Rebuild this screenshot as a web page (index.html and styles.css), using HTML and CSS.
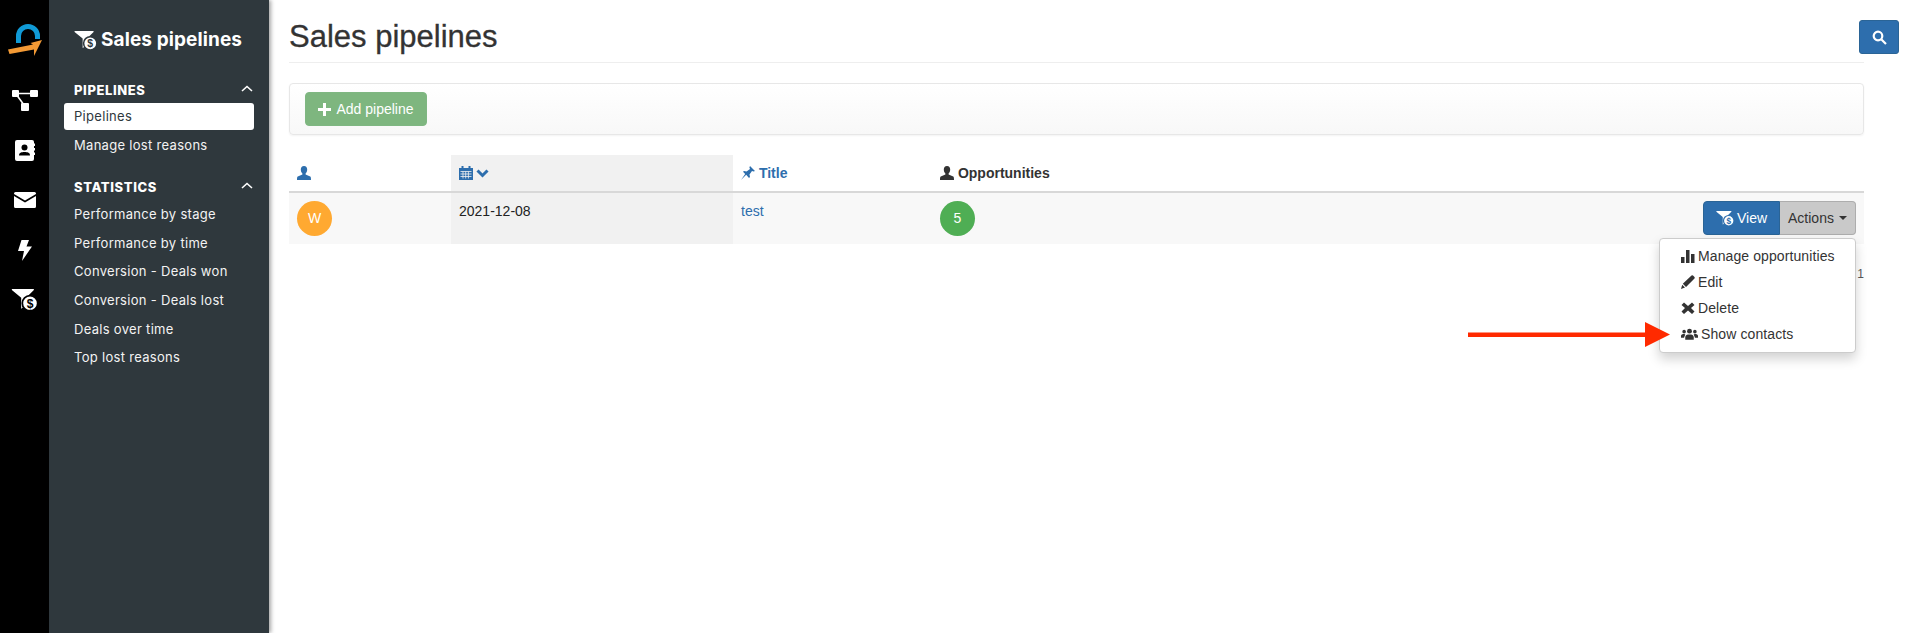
FILE: index.html
```html
<!DOCTYPE html>
<html lang="en">
<head>
<meta charset="utf-8">
<title>Sales pipelines</title>
<link rel="stylesheet" href="styles.css">
</head>
<body>
<svg class="defs" aria-hidden="true">
  <symbol id="user" viewBox="0 0 14 14">
    <path d="M7 0C9.2 0 10.2 1.6 10.2 3.6C10.2 5.4 9.4 6.8 8.6 7.6V8.6L13.2 10.6C13.8 11 14 11.6 14 14H0C0 11.6 .2 11 .8 10.6L5.4 8.6V7.6C4.6 6.8 3.8 5.4 3.8 3.6C3.8 1.6 4.800 0 7 0Z" fill="currentColor"/>
  </symbol>
  <symbol id="funnel-shape" viewBox="0 0 24 20">
    <path d="M1 0H20Q21 0 20.500 1L13.500 8V15L9 18V8L.5 1Q0 0 1 0Z" fill="currentColor"/>
  </symbol>
</svg>

<div class="app">
  <nav class="rail">
    <svg class="logo" viewBox="0 0 34 32" width="34" height="32">
      <path d="M10.500 19V12A9.500 9.500 0 0 1 29.500 12V15" fill="none" stroke="#109ad6" stroke-width="5"/>
      <path d="M0 25.500L25 20.500L22.500 19L34 16L26 32L26 25.500L1.500 30Z" fill="#f39a35"/>
    </svg>
    <div class="rail-slot">
      <svg viewBox="0 0 26 22" width="26" height="22">
        <path d="M4 4.500H20M4 5L12 16" stroke="#fff" stroke-width="1.600" fill="none"/>
        <rect x="0" y="1" width="7" height="7" rx="1" fill="#fff"/>
        <rect x="18" y="1" width="8" height="7" rx="1" fill="#fff"/>
        <rect x="9" y="14" width="8" height="8" rx="1" fill="#fff"/>
      </svg>
    </div>
    <div class="rail-slot">
      <svg viewBox="0 0 20 21" width="20" height="21">
        <path d="M2 0H17Q19 0 19 2V3.500H20V6H19V8H20V10.500H19V12.500H20V15H19V19Q19 21 17 21H2Q0 21 0 19V2Q0 0 2 0Z" fill="#fff"/>
        <circle cx="9.500" cy="7.500" r="3" fill="#000"/>
        <path d="M4 15.500C4 12.500 6.500 12 9.500 12S15 12.500 15 15.500Z" fill="#000"/>
      </svg>
    </div>
    <div class="rail-slot">
      <svg viewBox="0 0 22 16" width="22" height="16">
        <path d="M1.500 0H20.500Q22 0 22 1.500V2L11 8.500L0 2V1.500Q0 0 1.500 0Z" fill="#fff"/>
        <path d="M0 4L11 10.500L22 4V14.500Q22 16 20.500 16H1.500Q0 16 0 14.500Z" fill="#fff"/>
      </svg>
    </div>
    <div class="rail-slot">
      <svg viewBox="0 0 14 21" width="14" height="21">
        <path d="M3.500 0H11L8.500 6.500H14L4 21L6 11H0Z" fill="#fff"/>
      </svg>
    </div>
    <div class="rail-slot">
      <svg class="funnel" width="27" height="22" viewBox="0 0 24 20">
        <use href="#funnel-shape"/>
        <circle cx="17" cy="13" r="7" fill="currentColor" stroke="#000" stroke-width="1.600"/>
        <text x="17" y="17" text-anchor="middle" class="dollar" fill="#000">$</text>
      </svg>
    </div>
  </nav>

  <aside class="sidebar">
    <h2 class="side-title">
      <svg class="funnel" width="23" height="19" viewBox="0 0 24 20">
        <use href="#funnel-shape"/>
        <circle cx="17" cy="13" r="7" fill="currentColor" stroke="#2f383d" stroke-width="1.600"/>
        <text x="17" y="17" text-anchor="middle" class="dollar" fill="#2f383d">$</text>
      </svg>Sales pipelines</h2>
    <div class="side-group">
      <div class="group-head"><span>PIPELINES</span><svg class="chev" width="12" height="7" viewBox="0 0 12 7"><path d="M1 6L6 1.500L11 6" fill="none" stroke="#fff" stroke-width="1.600"/></svg></div>
      <a class="side-link active">Pipelines</a>
      <a class="side-link">Manage lost reasons</a>
    </div>
    <div class="side-group">
      <div class="group-head"><span>STATISTICS</span><svg class="chev" width="12" height="7" viewBox="0 0 12 7"><path d="M1 6L6 1.500L11 6" fill="none" stroke="#fff" stroke-width="1.600"/></svg></div>
      <a class="side-link">Performance by stage</a>
      <a class="side-link">Performance by time</a>
      <a class="side-link">Conversion - Deals won</a>
      <a class="side-link">Conversion - Deals lost</a>
      <a class="side-link">Deals over time</a>
      <a class="side-link">Top lost reasons</a>
    </div>
  </aside>

  <main class="main">
    <h1 class="page-title">Sales pipelines</h1>
    <button class="search-btn" aria-label="Search">
      <svg width="15" height="15" viewBox="0 0 15 15"><circle cx="6" cy="6" r="4.300" fill="none" stroke="#fff" stroke-width="2.200"/><path d="M9.500 9.500L14 14" stroke="#fff" stroke-width="2.200"/></svg>
    </button>
    <div class="toolbar">
      <button class="add-btn"><svg width="13" height="13" viewBox="0 0 13 13"><path d="M5 0H8V5H13V8H8V13H5V8H0V5H5Z" fill="#fff"/></svg>Add pipeline</button>
    </div>

    <table class="grid">
      <colgroup><col class="c1"><col class="c2"><col class="c3"><col></colgroup>
      <thead>
        <tr>
          <th class="link"><svg class="ic" width="14" height="14"><use href="#user"/></svg></th>
          <th class="link sorted">
            <svg class="ic" width="14" height="14" viewBox="0 0 14 14"><path d="M0 2H2.500V0H4.500V2H9.500V0H11.500V2H14V14H0Z" fill="currentColor"/><path d="M1.500 5.500H12.500M1.500 8H12.500M1.500 10.500H12.500M4 5.500V12.500M6.700 5.500V12.500M9.400 5.500V12.500" stroke="#f1f1f1" stroke-width=".8"/></svg>
            <svg class="ic chev-sort" width="13" height="9" viewBox="0 0 13 9"><path d="M1.500 1.500L6.500 6.500L11.500 1.500" fill="none" stroke="currentColor" stroke-width="3"/></svg>
          </th>
          <th class="link"><svg class="ic" width="14" height="14" viewBox="0 0 14 14"><path d="M9 0L14 5L12.600 5.600L11 5L8.500 8.500L9 11L8 12L5.200 8.800L0 14L4.200 8L2 5.800L3 5L5.500 5.500L9 3L8.400 1.400Z" fill="currentColor"/></svg> Title</th>
          <th><svg class="ic" width="14" height="14"><use href="#user"/></svg> Opportunities</th>
        </tr>
      </thead>
      <tbody>
        <tr>
          <td><span class="avatar orange">W</span></td>
          <td class="sorted">2021-12-08</td>
          <td><a class="link">test</a></td>
          <td><span class="avatar green">5</span></td>
        </tr>
      </tbody>
    </table>

    <div class="row-actions">
      <div class="btn-group">
        <button class="view-btn">
          <svg class="funnel" width="18" height="15" viewBox="0 0 24 20">
            <use href="#funnel-shape"/>
            <circle cx="17" cy="13" r="7" fill="currentColor" stroke="#2d6ead" stroke-width="1.600"/>
            <text x="17" y="17" text-anchor="middle" class="dollar" fill="#2d6ead">$</text>
          </svg>View</button>
        <button class="actions-btn">Actions<span class="caret"></span></button>
      </div>
      <ul class="menu">
        <li><svg width="14" height="13" viewBox="0 0 14 13"><path d="M0 7H3.500V13H0ZM5 0H8.500V13H5ZM10 4H13.500V13H10Z" fill="currentColor"/></svg>Manage opportunities</li>
        <li><svg width="14" height="14" viewBox="0 0 14 14"><path d="M10.500 0.500Q11.500 0 12 0.500L13.500 2Q14 2.500 13.500 3.500L5 12L1.800 8.800ZM1.200 9.800L4 12.600L0 14Z" fill="currentColor"/></svg>Edit</li>
        <li><svg width="14" height="14" viewBox="0 0 14 14"><path d="M3 1.500L7 5L11 1.500L13.500 4L10 7L13.500 10.500L11 13L7 9.500L3 13L.5 10.500L4 7L.5 4Z" fill="currentColor"/></svg>Delete</li>
        <li><svg width="17" height="12" viewBox="0 0 18 12"><circle cx="9" cy="3" r="2.600" fill="currentColor"/><circle cx="3.300" cy="3.500" r="1.900" fill="currentColor"/><circle cx="14.700" cy="3.500" r="1.900" fill="currentColor"/><path d="M4.500 12V9.500C4.500 7 6.500 6.500 9 6.500S13.500 7 13.500 9.500V12ZM0 10V8C0 6.500 1.500 6 3.500 6L4.500 6.500L3.200 10ZM18 10V8C18 6.500 16.500 6 14.500 6L13.500 6.500L14.800 10Z" fill="currentColor"/></svg>Show contacts</li>
      </ul>
      <svg class="arrow" width="202" height="26" viewBox="0 0 202 26"><path d="M0 10.500H177V0L202 12.500L177 25V15H0Z" fill="#ff2a00"/></svg>
      <span class="page-no">1</span>
    </div>
  </main>
</div>
</body>
</html>
```
FILE: styles.css
```css
* { box-sizing: border-box; }
html, body { margin: 0; height: 100%; overflow: hidden; }
body { font-family: "Liberation Sans", Arial, sans-serif; font-size: 14px; color: #222; background: #fff; }
.defs { position: absolute; width: 0; height: 0; }
.app { display: flex; height: 633px; }

.rail { width: 49px; flex: none; background: #000; color: #fff; display: flex; flex-direction: column; align-items: center; padding-top: 24px; }
.logo { margin: 0 0 19px 0; flex: none; }
.rail-slot { height: 50px; flex: none; display: flex; align-items: center; justify-content: center; }
.funnel { flex: none; }
.dollar { font: 700 11px "Liberation Sans", sans-serif; }

.sidebar { width: 220px; flex: none; background: #2f383d; color: #fff; padding: 29px 15px 0 15px; font-family: Inter, "Liberation Sans", sans-serif; box-shadow: 2px 0 4px rgba(0,0,0,.35); }
.side-title { margin: 0 0 30px 10px; font-size: 19px; line-height: 22px; font-weight: 700; display: flex; align-items: center; gap: 4px; white-space: nowrap; letter-spacing: .1px; }
.side-group { margin-bottom: 18.700px; }
.group-head { display: flex; justify-content: space-between; align-items: center; padding: 0 1px 0 10px; margin-bottom: 4px; font-size: 13px; line-height: 18px; font-weight: 800; letter-spacing: .6px; }
.chev { margin-top: -4px; }
.side-link { display: block; height: 28.600px; line-height: 28.600px; padding-left: 10px; font-size: 13px; letter-spacing: .3px; color: #f3f3f3; white-space: nowrap; }
.side-link.active { background: #fff; color: #2f383d; border-radius: 3px; height: 27px; line-height: 27px; margin-bottom: 1px; }

.main { flex: 1; min-width: 0; position: relative; padding: 0 55px 0 20px; }
.page-title { margin: 0; height: 63px; padding-top: 19px; font-size: 31px; line-height: 36px; font-weight: 400; color: #333; border-bottom: 1px solid #eee; -webkit-text-stroke: .3px #333; }
.search-btn { position: absolute; top: 20px; right: 20px; width: 40px; height: 34px; background: #2d6ead; border: 1px solid #2a6496; border-radius: 3px; display: flex; align-items: center; justify-content: center; padding: 0; }

.toolbar { margin-top: 20px; height: 52px; padding: 8px 15px; border: 1px solid #e7e7e7; border-radius: 4px; background: linear-gradient(#fff, #f8f8f8); box-shadow: 0 1px 2px rgba(0,0,0,.05); }
.add-btn { height: 34px; width: 122px; padding: 0; border: 1px solid #7fb782; border-radius: 4px; background: #7eb67f; color: #fff; font: 14px "Liberation Sans", sans-serif; display: flex; align-items: center; justify-content: center; gap: 5px; }

.grid { margin-top: 20px; width: 100%; table-layout: fixed; border-collapse: collapse; }
.c1 { width: 162px; } .c2 { width: 282px; } .c3 { width: 199px; }
.grid th { height: 37px; padding: 8px; text-align: left; font-size: 14px; font-weight: 700; border-bottom: 2px solid #d8d8d8; color: #333; }
.grid td { height: 51px; padding: 8px; vertical-align: top; background: #f8f8f8; line-height: 20px; }
.grid .sorted { background: #f1f1f1; }
.grid th.link, a.link { color: #2d6ead; }
.ic { vertical-align: -2px; }
.chev-sort { vertical-align: 0; margin-left: -1px; }
.avatar { display: block; width: 35px; height: 35px; border-radius: 50%; color: #fff; text-align: center; line-height: 35px; font-size: 14px; }
.orange { background: #ffa931; }
.green { background: #4fae54; }

.row-actions { position: absolute; top: 201px; right: 63px; }
.btn-group { display: flex; justify-content: flex-end; }
.view-btn, .actions-btn { height: 34px; font: 14px "Liberation Sans", sans-serif; padding: 0; display: flex; align-items: center; justify-content: center; }
.view-btn { width: 77px; background: #2d6ead; color: #fff; border: 1px solid #2a6496; border-radius: 4px 0 0 4px; gap: 3px; }
.actions-btn { width: 76px; background: #c9c9c9; color: #333; border: 1px solid #adadad; border-left: 0; border-radius: 0 4px 4px 0; }
.caret { margin-left: 5px; border-top: 4px solid #333; border-left: 4px solid transparent; border-right: 4px solid transparent; }

.menu { position: absolute; top: 37px; right: 0; width: 197px; height: 115px; margin: 0; padding: 4px 0; list-style: none; background: #fff; border: 1px solid #ccc; border-radius: 4px; box-shadow: 0 6px 12px rgba(0,0,0,.18); font-size: 14px; letter-spacing: .1px; color: #333; }
.menu li { height: 26px; padding-left: 21px; display: flex; align-items: center; gap: 3px; white-space: nowrap; }
.arrow { position: absolute; top: 121px; right: 186px; }
.page-no { position: absolute; top: 66px; right: -8px; font-size: 12px; color: #555; }
```
